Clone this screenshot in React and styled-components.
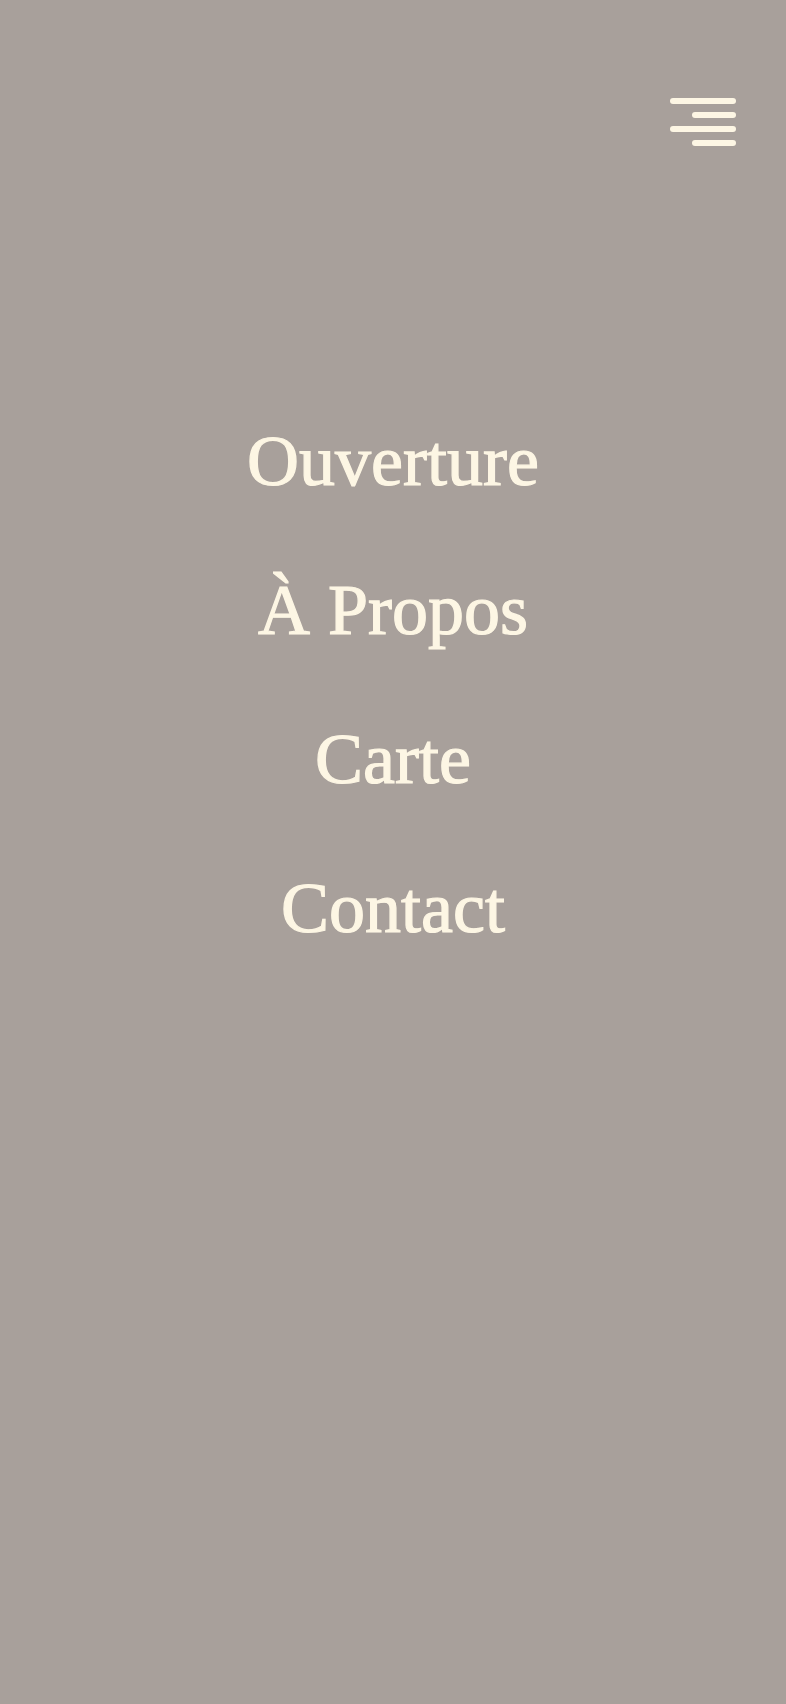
import React from "react"
import styled, { createGlobalStyle } from "styled-components"

const GlobalStyle = createGlobalStyle`
    html, body {
        margin: 0;
        padding: 0;
        background: #a8a09b;
    }
`

const Page = styled.div`
    min-height: 1704px;
    background: #a8a09b;
    font-family: 'Liberation Serif', 'Times New Roman', serif;
`

const Header = styled.header`
    display: flex;
    justify-content: flex-end;
    padding: 98px 50px 0 0;
`

const MenuButton = styled.button`
    width: 66px;
    height: 48px;
    padding: 0;
    border: none;
    background: transparent;
    cursor: pointer;
    display: flex;
`

const Nav = styled.nav`
    display: flex;
    flex-direction: column;
    align-items: center;
    gap: 63px;
    margin-top: 272px;
`

const NavLink = styled.a`
    font-size: 72px;
    line-height: 86px;
    color: #fdf6e4;
    -webkit-text-stroke: 1.2px #fdf6e4;
    text-decoration: none;
    cursor: pointer;
`

const links = ["Ouverture", "À Propos", "Carte", "Contact"]

function Burger(){
    return(
        <svg width="66" height="48" viewBox="0 0 66 48" fill="none" stroke="#fdf6e4" strokeWidth="6" strokeLinecap="round">
            <line x1="3" y1="3" x2="63" y2="3" />
            <line x1="25" y1="17" x2="63" y2="17" />
            <line x1="3" y1="31" x2="63" y2="31" />
            <line x1="25" y1="45" x2="63" y2="45" />
        </svg>
    )
}

export default function App(){
    return(
        <Page>
            <GlobalStyle />
            <Header>
                <MenuButton aria-label="Menu">
                    <Burger />
                </MenuButton>
            </Header>
            <Nav>
                {links.map((label) => (
                    <NavLink key={label}>{label}</NavLink>
                ))}
            </Nav>
        </Page>
    )
}
